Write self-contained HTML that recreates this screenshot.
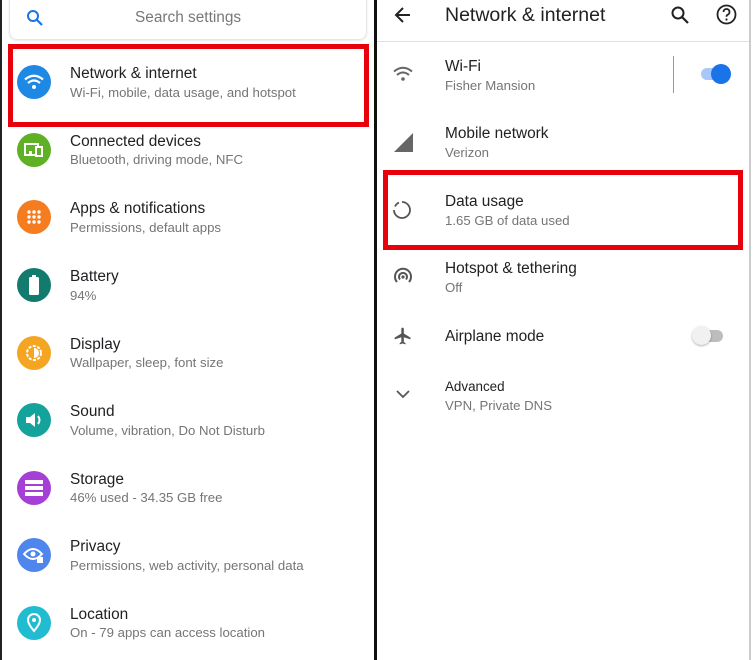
<!DOCTYPE html>
<html><head><meta charset="utf-8"><style>
*{margin:0;padding:0;box-sizing:border-box}
body{width:753px;height:660px;background:#fff;position:relative;overflow:hidden;font-family:"Liberation Sans",sans-serif}
.a{position:absolute}
.t{position:absolute;font-size:15.4px;color:#202124;white-space:nowrap}
.s{position:absolute;font-size:13.2px;color:#757575;white-space:nowrap}
.ic{position:absolute;width:34px;height:34px;border-radius:50%;display:flex;align-items:center;justify-content:center}
</style></head><body>
<div class="a" style="left:0;top:0;width:2px;height:660px;background:#222"></div>
<div class="a" style="left:374px;top:0;width:3px;height:660px;background:#111"></div>
<div class="a" style="left:749px;top:0;width:2px;height:660px;background:#ccc"></div>

<div class="a" style="left:9px;top:-4px;width:358px;height:44px;border:1px solid #e6e6e6;border-top:none;border-radius:0 0 8px 8px;box-shadow:0 1px 2px rgba(0,0,0,.1)"></div>
<svg class="a" style="left:26px;top:9px" width="18" height="18" viewBox="0 0 18 18"><circle cx="7" cy="7" r="5" fill="none" stroke="#1a73e8" stroke-width="2"/><path d="M11 11l5 5" stroke="#1a73e8" stroke-width="2.2"/></svg>
<div class="a" style="left:135px;top:9px;font-size:15.4px;color:#777">Search settings</div>

<div class="a" style="left:8px;top:44px;width:361px;height:83px;border:5px solid #e8000b"></div>

<div class="ic" style="left:17px;top:65px;background:#1e88e5"><svg width="20" height="16" viewBox="0 0 20 16"><path d="M1 5.5Q10-2 19 5.5" stroke="#fff" stroke-width="2.2" fill="none"/><path d="M4 9Q10 4 16 9" stroke="#fff" stroke-width="2.2" fill="none"/><circle cx="10" cy="13" r="2" fill="#fff"/></svg></div>
<div class="t" style="left:70px;top:65px">Network &amp; internet</div><div class="s" style="left:70px;top:85px">Wi-Fi, mobile, data usage, and hotspot</div>

<div class="ic" style="left:17px;top:133px;background:#5fb025"><svg width="20" height="16" viewBox="0 0 20 16"><rect x="1" y="2" width="13" height="11" fill="none" stroke="#fff" stroke-width="2"/><rect x="12" y="5" width="6" height="9" fill="#5fb025" stroke="#fff" stroke-width="2"/><rect x="5" y="9" width="3" height="3" fill="#fff"/></svg></div>
<div class="t" style="left:70px;top:133px">Connected devices</div><div class="s" style="left:70px;top:152px">Bluetooth, driving mode, NFC</div>

<div class="ic" style="left:17px;top:200px;background:#f57c1f"><svg width="16" height="16" viewBox="0 0 16 16" fill="#fff"><circle cx="3" cy="3" r="1.7"/><circle cx="8" cy="3" r="1.7"/><circle cx="13" cy="3" r="1.7"/><circle cx="3" cy="8" r="1.7"/><circle cx="8" cy="8" r="1.7"/><circle cx="13" cy="8" r="1.7"/><circle cx="3" cy="13" r="1.7"/><circle cx="8" cy="13" r="1.7"/><circle cx="13" cy="13" r="1.7"/></svg></div>
<div class="t" style="left:70px;top:200px">Apps &amp; notifications</div><div class="s" style="left:70px;top:220px">Permissions, default apps</div>

<div class="ic" style="left:17px;top:268px;background:#127b6e"><svg width="10" height="20" viewBox="0 0 10 20"><rect x="3" y="0" width="4" height="3" fill="#fff"/><rect x="0" y="2" width="10" height="18" rx="1.5" fill="#fff"/></svg></div>
<div class="t" style="left:70px;top:268px">Battery</div><div class="s" style="left:70px;top:288px">94%</div>

<div class="ic" style="left:17px;top:336px;background:#f4a522"><svg width="20" height="20" viewBox="0 0 20 20"><circle cx="10" cy="10" r="7" fill="none" stroke="#fff" stroke-width="2" stroke-dasharray="3 1.5"/><path d="M10 5a5 5 0 0 1 0 10z" fill="#fff"/></svg></div>
<div class="t" style="left:70px;top:336px">Display</div><div class="s" style="left:70px;top:355px">Wallpaper, sleep, font size</div>

<div class="ic" style="left:17px;top:403px;background:#14a39a"><svg width="20" height="16" viewBox="0 0 20 16"><path d="M2 5h4l5-4v14l-5-4H2z" fill="#fff"/><path d="M14 4q3 4 0 8" stroke="#fff" stroke-width="2" fill="none"/></svg></div>
<div class="t" style="left:70px;top:403px">Sound</div><div class="s" style="left:70px;top:423px">Volume, vibration, Do Not Disturb</div>

<div class="ic" style="left:17px;top:471px;background:#a63fd6"><svg width="18" height="16" viewBox="0 0 18 16" fill="#fff"><rect y="0" width="18" height="4"/><rect y="6" width="18" height="4"/><rect y="12" width="18" height="4"/></svg></div>
<div class="t" style="left:70px;top:471px">Storage</div><div class="s" style="left:70px;top:490px">46% used - 34.35 GB free</div>

<div class="ic" style="left:17px;top:538px;background:#4f86ee"><svg width="22" height="18" viewBox="0 0 22 18"><path d="M1 8q9-10 18 0q-9 10-18 0z" fill="none" stroke="#fff" stroke-width="2"/><circle cx="10" cy="8" r="2.5" fill="#fff"/><rect x="14" y="11" width="6" height="6" fill="#fff"/></svg></div>
<div class="t" style="left:70px;top:538px">Privacy</div><div class="s" style="left:70px;top:558px">Permissions, web activity, personal data</div>

<div class="ic" style="left:17px;top:606px;background:#22bcd1"><svg width="14" height="20" viewBox="0 0 14 20"><path d="M7 18Q1 11 1 7a6 6 0 0 1 12 0q0 4-6 11z" fill="none" stroke="#fff" stroke-width="2"/><circle cx="7" cy="7" r="2" fill="#fff"/></svg></div>
<div class="t" style="left:70px;top:606px">Location</div><div class="s" style="left:70px;top:625px">On - 79 apps can access location</div>

<svg class="a" style="left:394px;top:6px" width="18" height="18" viewBox="0 0 18 18"><path d="M16 9H3M9 2L2 9l7 7" stroke="#222" stroke-width="2" fill="none"/></svg>
<div class="a" style="left:445px;top:4px;font-size:19.5px;color:#202124">Network &amp; internet</div>
<svg class="a" style="left:670px;top:5px" width="20" height="20" viewBox="0 0 20 20"><circle cx="8" cy="8" r="5.5" fill="none" stroke="#222" stroke-width="2"/><path d="M12 12l6 6" stroke="#222" stroke-width="2.2"/></svg>
<svg class="a" style="left:716px;top:4px" width="21" height="21" viewBox="0 0 21 21"><circle cx="10.5" cy="10.5" r="9" fill="none" stroke="#222" stroke-width="1.8"/><path d="M7.5 8a3 3 0 1 1 4 2.8q-1 .5-1 2" stroke="#222" stroke-width="1.8" fill="none"/><circle cx="10.5" cy="15.5" r="1.1" fill="#222"/></svg>
<div class="a" style="left:377px;top:41px;width:372px;height:1px;background:#e0e0e0"></div>

<svg class="a" style="left:393px;top:66px" width="20" height="16" viewBox="0 0 20 16"><path d="M1 5.5Q10-2 19 5.5" stroke="#666" stroke-width="2" fill="none"/><path d="M4 9Q10 4 16 9" stroke="#666" stroke-width="2" fill="none"/><circle cx="10" cy="13" r="1.8" fill="#666"/></svg>
<div class="t" style="left:445px;top:58px">Wi-Fi</div><div class="s" style="left:445px;top:78px">Fisher Mansion</div>
<div class="a" style="left:673px;top:56px;width:1px;height:37px;background:#999"></div>
<div class="a" style="left:701px;top:68px;width:28px;height:12px;border-radius:6px;background:#a8c7fa"></div>
<div class="a" style="left:711px;top:64px;width:20px;height:20px;border-radius:50%;background:#1a73e8"></div>

<svg class="a" style="left:394px;top:133px" width="19" height="19" viewBox="0 0 19 19"><path d="M0 19L19 0v19z" fill="#666"/></svg>
<div class="t" style="left:445px;top:125px">Mobile network</div><div class="s" style="left:445px;top:145px">Verizon</div>

<div class="a" style="left:383px;top:170px;width:360px;height:80px;border:5px solid #e8000b"></div>
<svg class="a" style="left:392px;top:200px" width="20" height="20" viewBox="0 0 20 20"><path d="M10 2a8 8 0 1 1-8 8M3 6.5A8 8 0 0 1 7 2.6" stroke="#555" stroke-width="1.8" fill="none"/></svg>
<div class="t" style="left:445px;top:193px">Data usage</div><div class="s" style="left:445px;top:213px">1.65 GB of data used</div>

<svg class="a" style="left:393px;top:267px" width="20" height="20" viewBox="0 0 20 20"><path d="M4 15A8 8 0 1 1 16 15" stroke="#555" stroke-width="2" fill="none"/><path d="M7 12.5A4 4 0 1 1 13 12.5" stroke="#555" stroke-width="2" fill="none"/><circle cx="10" cy="10" r="1.6" fill="#555"/></svg>
<div class="t" style="left:445px;top:260px">Hotspot &amp; tethering</div><div class="s" style="left:445px;top:280px">Off</div>

<svg class="a" style="left:393px;top:326px" width="20" height="20" viewBox="0 0 24 24"><path d="M21 16v-2l-8-5V3.5a1.5 1.5 0 0 0-3 0V9l-8 5v2l8-2.5V19l-2 1.5V22l3.5-1 3.5 1v-1.5L13 19v-5.5z" fill="#555"/></svg>
<div class="t" style="left:445px;top:328px">Airplane mode</div>
<div class="a" style="left:694px;top:330px;width:29px;height:12px;border-radius:6px;background:#bdbdbd"></div>
<div class="a" style="left:692px;top:326px;width:19px;height:19px;border-radius:50%;background:#f1f1f1;box-shadow:0 1px 2px rgba(0,0,0,.3)"></div>

<svg class="a" style="left:396px;top:389px" width="14" height="10" viewBox="0 0 14 10"><path d="M1 2l6 6 6-6" stroke="#555" stroke-width="1.8" fill="none"/></svg>
<div class="a" style="left:445px;top:379px;font-size:13.4px;color:#202124">Advanced</div><div class="s" style="left:445px;top:398px">VPN, Private DNS</div>
</body></html>
